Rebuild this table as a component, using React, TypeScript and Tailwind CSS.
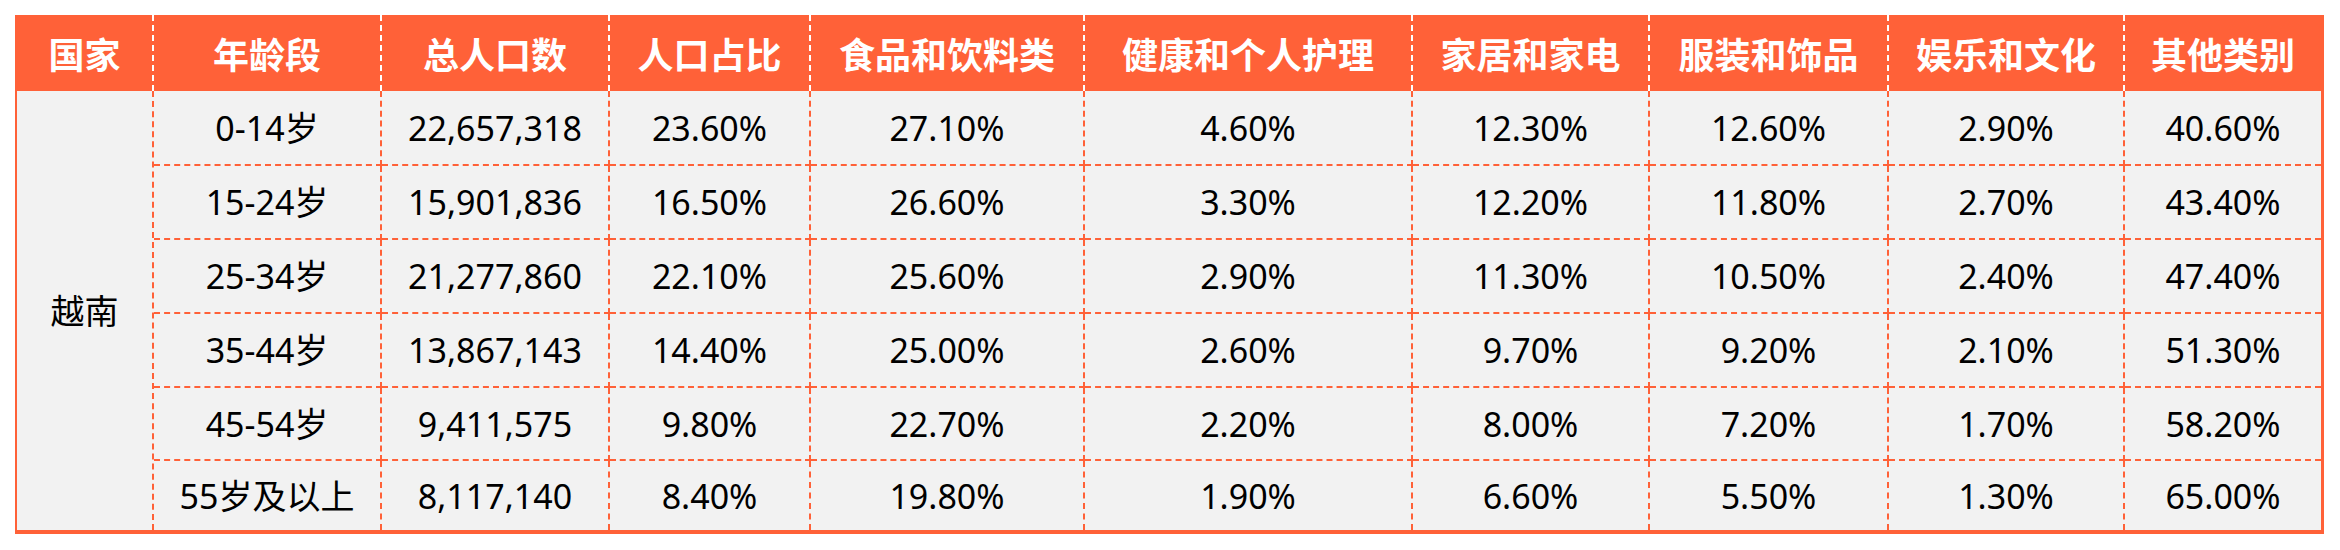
const headers = [
  "国家",
  "年龄段",
  "总人口数",
  "人口占比",
  "食品和饮料类",
  "健康和个人护理",
  "家居和家电",
  "服装和饰品",
  "娱乐和文化",
  "其他类别",
];

// 年龄段, 总人口数, 人口占比, then the category shares
const rows = [
  ["0-14岁", "22,657,318", "23.60%", "27.10%", "4.60%", "12.30%", "12.60%", "2.90%", "40.60%"],
  ["15-24岁", "15,901,836", "16.50%", "26.60%", "3.30%", "12.20%", "11.80%", "2.70%", "43.40%"],
  ["25-34岁", "21,277,860", "22.10%", "25.60%", "2.90%", "11.30%", "10.50%", "2.40%", "47.40%"],
  ["35-44岁", "13,867,143", "14.40%", "25.00%", "2.60%", "9.70%", "9.20%", "2.10%", "51.30%"],
  ["45-54岁", "9,411,575", "9.80%", "22.70%", "2.20%", "8.00%", "7.20%", "1.70%", "58.20%"],
  ["55岁及以上", "8,117,140", "8.40%", "19.80%", "1.90%", "6.60%", "5.50%", "1.30%", "65.00%"],
];

const App = () => {
  return (
    <div className="bg-white pl-[15px] pt-[15px] pb-[16px]">
      <div className="grid w-[2309px] grid-cols-[137px_228px_228px_201px_274px_328px_237px_239px_236px_196px] grid-rows-[76px_75px_74px_74px_74px_73px_69px] border-b-4 border-l-2 border-r-[3px] border-solid border-[#FF6138] bg-[#F2F2F2] font-['Noto_Sans','Noto_Sans_CJK_SC',sans-serif] text-[34px] leading-none text-black">
        {headers.map((h, i) => (
          <div
            key={h}
            className={`flex items-center justify-center bg-[#FF6138] font-['Noto_Sans_CJK_SC',sans-serif] text-[36px] font-bold text-white ${
              i < headers.length - 1 ? "border-r-2 border-dashed border-white" : ""
            }`}
          >
            {h}
          </div>
        ))}

        <div className="row-span-6 flex items-center justify-center border-r-2 border-dashed border-[#FF6138]">
          越南
        </div>

        {rows.map((row, r) =>
          row.map((cell, c) => (
            <div
              key={`${r}-${c}`}
              className={`flex items-center justify-center border-dashed border-[#FF6138] ${
                c < row.length - 1 ? "border-r-2" : ""
              } ${r < rows.length - 1 ? "border-b-2" : ""}`}
            >
              {cell}
            </div>
          ))
        )}
      </div>
    </div>
  );
};

export default App;
